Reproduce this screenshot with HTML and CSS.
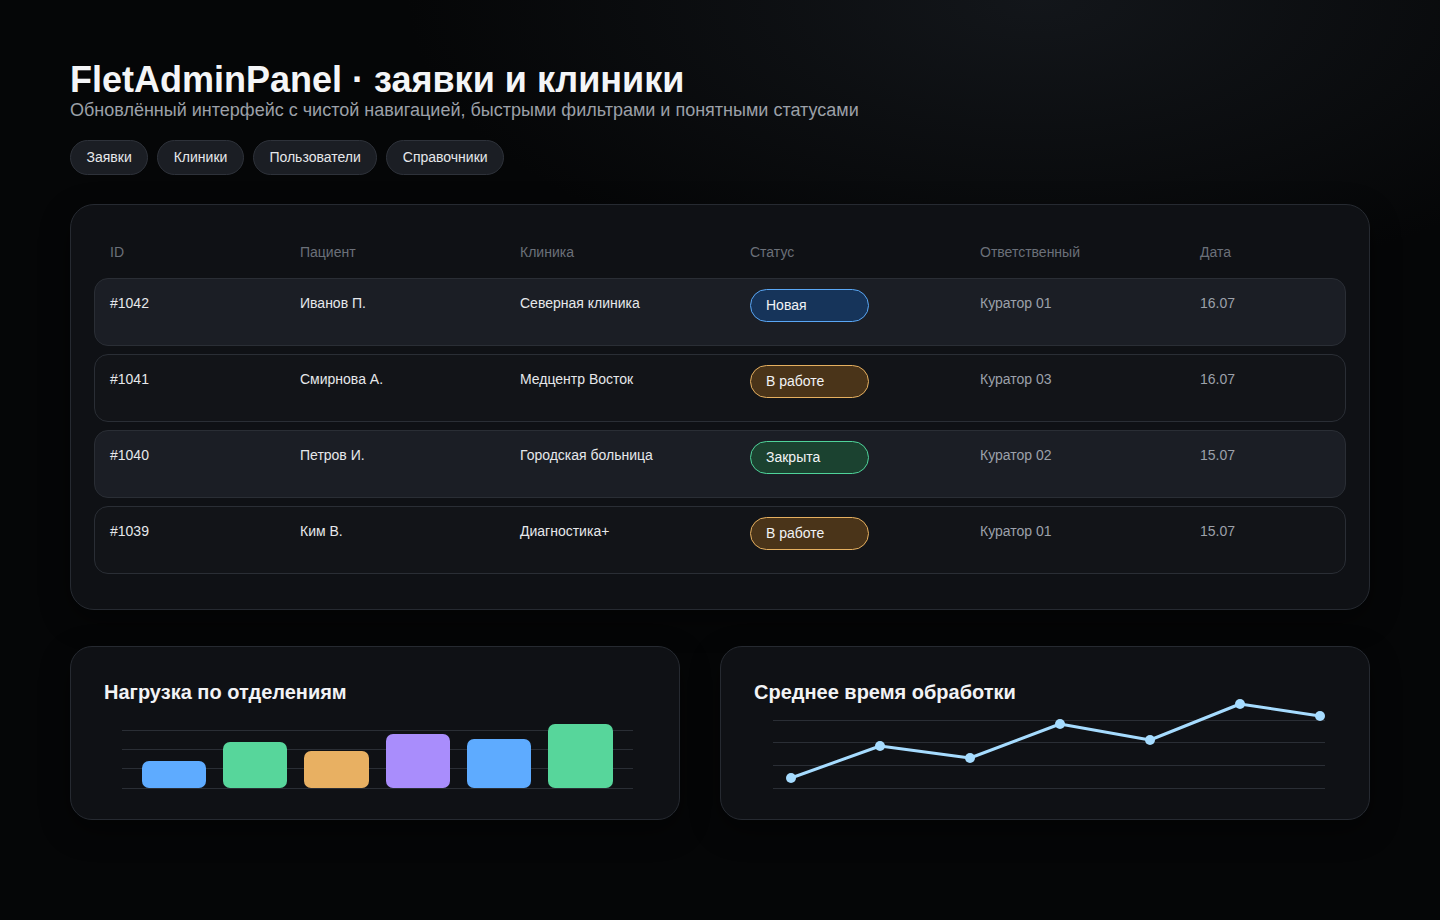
FILE: index.html
```html
<!DOCTYPE html>
<html lang="ru">
<head>
<meta charset="utf-8">
<title>FletAdminPanel · заявки и клиники</title>
<link rel="stylesheet" href="styles.css">
</head>
<body>
<main class="page">
  <header class="head">
    <h1 class="title">FletAdminPanel · заявки и клиники</h1>
    <p class="subtitle">Обновлённый интерфейс с чистой навигацией, быстрыми фильтрами и понятными статусами</p>
    <nav class="nav">
      <a class="pill">Заявки</a>
      <a class="pill">Клиники</a>
      <a class="pill">Пользователи</a>
      <a class="pill">Справочники</a>
    </nav>
  </header>

  <section class="card table-card">
    <div class="thead">
      <span class="c c1">ID</span>
      <span class="c c2">Пациент</span>
      <span class="c c3">Клиника</span>
      <span class="c c4">Статус</span>
      <span class="c c5">Ответственный</span>
      <span class="c c6">Дата</span>
    </div>
    <div class="row alt">
      <span class="c c1 t">#1042</span>
      <span class="c c2 t">Иванов П.</span>
      <span class="c c3 t">Северная клиника</span>
      <span class="c c4"><span class="badge new">Новая</span></span>
      <span class="c c5 t muted">Куратор 01</span>
      <span class="c c6 t muted">16.07</span>
    </div>
    <div class="row">
      <span class="c c1 t">#1041</span>
      <span class="c c2 t">Смирнова А.</span>
      <span class="c c3 t">Медцентр Восток</span>
      <span class="c c4"><span class="badge work">В работе</span></span>
      <span class="c c5 t muted">Куратор 03</span>
      <span class="c c6 t muted">16.07</span>
    </div>
    <div class="row alt">
      <span class="c c1 t">#1040</span>
      <span class="c c2 t">Петров И.</span>
      <span class="c c3 t">Городская больница</span>
      <span class="c c4"><span class="badge done">Закрыта</span></span>
      <span class="c c5 t muted">Куратор 02</span>
      <span class="c c6 t muted">15.07</span>
    </div>
    <div class="row">
      <span class="c c1 t">#1039</span>
      <span class="c c2 t">Ким В.</span>
      <span class="c c3 t">Диагностика+</span>
      <span class="c c4"><span class="badge work">В работе</span></span>
      <span class="c c5 t muted">Куратор 01</span>
      <span class="c c6 t muted">15.07</span>
    </div>
  </section>

  <section class="charts">
    <div class="card chart-card">
      <h2 class="chart-title">Нагрузка по отделениям</h2>
      <svg class="chart" width="542" height="92" viewBox="0 0 542 92">
        <g stroke="#2a2e35" stroke-width="1">
          <line x1="18" y1="26.5" x2="529" y2="26.5"/>
          <line x1="18" y1="45.5" x2="529" y2="45.5"/>
          <line x1="18" y1="64.5" x2="529" y2="64.5"/>
          <line x1="18" y1="84.5" x2="529" y2="84.5"/>
        </g>
        <rect x="38" y="57" width="64" height="27" rx="7" fill="#5eabff"/>
        <rect x="119" y="38" width="64" height="46" rx="7" fill="#57d69b"/>
        <rect x="200" y="47" width="65" height="37" rx="7" fill="#e8b062"/>
        <rect x="282" y="30" width="64" height="54" rx="7" fill="#a98dfc"/>
        <rect x="363" y="35" width="64" height="49" rx="7" fill="#5eabff"/>
        <rect x="444" y="20" width="65" height="64" rx="7" fill="#57d69b"/>
      </svg>
    </div>
    <div class="card chart-card">
      <h2 class="chart-title">Среднее время обработки</h2>
      <svg class="chart" width="582" height="92" viewBox="0 0 582 92">
        <g stroke="#2a2e35" stroke-width="1">
          <line x1="19" y1="16.5" x2="571" y2="16.5"/>
          <line x1="19" y1="38.5" x2="571" y2="38.5"/>
          <line x1="19" y1="61.5" x2="571" y2="61.5"/>
          <line x1="19" y1="84.5" x2="571" y2="84.5"/>
        </g>
        <polyline points="37,74 126,42 216,54 306,20 396,36 486,0 566,12" fill="none" stroke="#a6dcff" stroke-width="3" stroke-linejoin="round"/>
        <g fill="#a6dcff">
          <circle cx="37" cy="74" r="5"/>
          <circle cx="126" cy="42" r="5"/>
          <circle cx="216" cy="54" r="5"/>
          <circle cx="306" cy="20" r="5"/>
          <circle cx="396" cy="36" r="5"/>
          <circle cx="486" cy="0" r="5"/>
          <circle cx="566" cy="12" r="5"/>
        </g>
      </svg>
    </div>
  </section>
</main>
</body>
</html>
```

FILE: styles.css
```css
* { box-sizing: border-box; }

html, body {
  margin: 0;
  height: 100%;
}

body {
  font-family: "Liberation Sans", Arial, sans-serif;
  color: #e6e8eb;
  background:
    radial-gradient(ellipse 900px 420px at 72% 0%, rgba(30, 35, 42, 0.55), rgba(5, 6, 7, 0) 70%),
    #050607;
  min-height: 920px;
}

.page {
  width: 1300px;
  margin: 0 0 0 70px;
  padding-top: 59px;
}

/* heading */
.title {
  margin: 0;
  font-size: 36px;
  line-height: 41.4px;
  font-weight: 700;
  color: #f4f5f7;
}

.subtitle {
  margin: 0;
  font-size: 18px;
  line-height: 20.7px;
  color: #9ca0a8;
}

.nav {
  display: flex;
  gap: 9px;
  margin-top: 19px;
}

.pill {
  display: flex;
  align-items: center;
  height: 35px;
  padding: 0 15.5px 2px;
  border-radius: 18px;
  background: #1b1e24;
  border: 1px solid #2e323a;
  font-size: 14px;
  color: #e6e8eb;
}

/* cards */
.card {
  background: #0f1115;
  border: 1px solid #262a31;
  box-shadow: 0 10px 30px rgba(0, 0, 0, 0.45);
}

.table-card {
  margin-top: 29px;
  border-radius: 24px;
  padding: 30px 23px 35px;
  display: flex;
  flex-direction: column;
  gap: 8px;
}

.thead,
.row {
  display: flex;
  align-items: flex-start;
  padding: 0 16px;
}

.thead {
  height: 35px;
  align-items: center;
  font-size: 14px;
  color: #6b7079;
}

.row {
  height: 68px;
  padding: 10px 15px 0;
  border-radius: 14px;
  border: 1px solid #2a2e35;
  background: #121418;
  font-size: 14px;
}

.row.alt { background: #1b1e25; }

.c { display: block; line-height: 17px; }
.c1 { width: 190px; }
.c2 { width: 220px; }
.c3 { width: 230px; }
.c4 { width: 230px; }
.c5 { width: 220px; }
.c6 { flex: 1; }

.t { margin-top: 6px; color: #e6e8eb; }
.t.muted { color: #9ca1aa; }

.badge {
  display: flex;
  align-items: center;
  width: 119px;
  height: 33px;
  padding: 0 15px;
  border-radius: 17px;
  border: 1px solid;
  font-size: 14px;
  color: #f1f3f5;
}

.badge.new  { background: #16345a; border-color: #5aa7f5; }
.badge.work { background: #4a3419; border-color: #e6b060; }
.badge.done { background: #1b4230; border-color: #4fd39a; }

/* charts */
.charts {
  display: grid;
  grid-template-columns: 610px 650px;
  gap: 40px;
  margin-top: 36px;
}

.chart-card {
  height: 174px;
  border-radius: 22px;
  padding: 33px 33px 0;
}

.chart-title {
  margin: 0;
  font-size: 20px;
  line-height: 24px;
  font-weight: 700;
  color: #f2f3f5;
}

.chart {
  display: block;
  overflow: visible;
}
```
